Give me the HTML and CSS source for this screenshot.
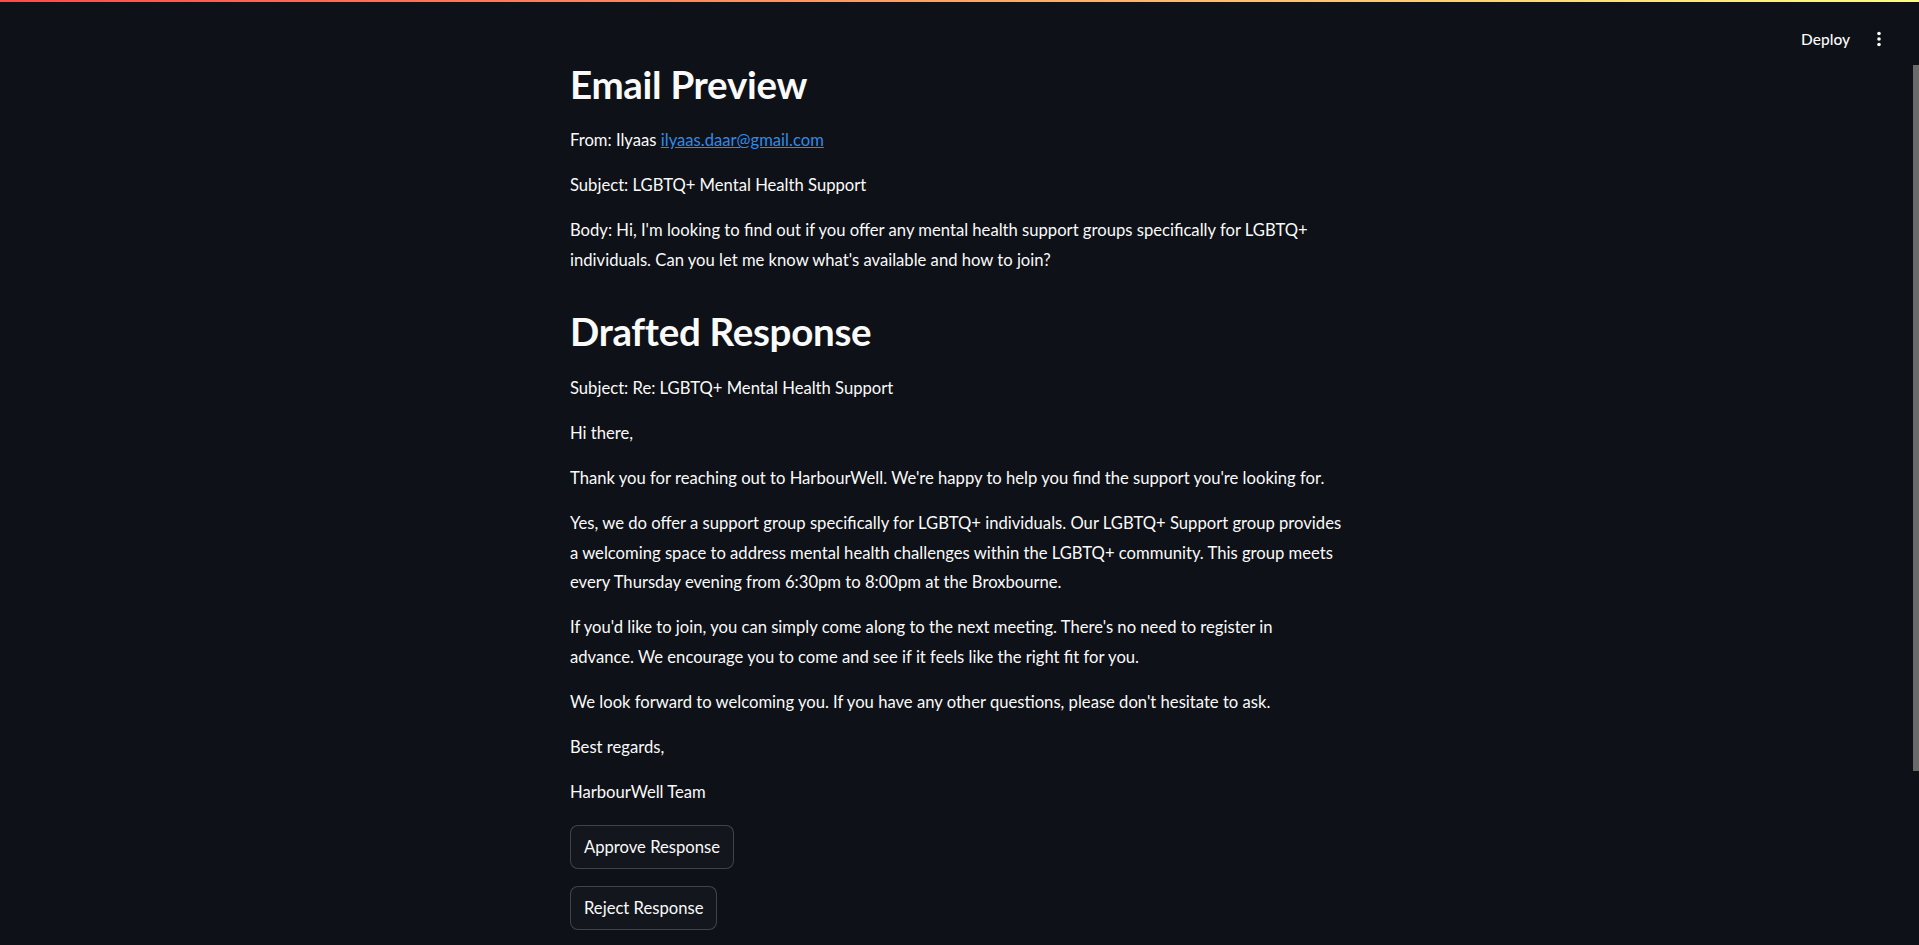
FILE: index.html
```html
<!DOCTYPE html>
<html lang="en">
<head>
<meta charset="utf-8">
<title>Email Preview</title>
<link rel="stylesheet" href="styles.css">
</head>
<body>
<div class="app">
  <div class="decoration"></div>
  <div class="toolbar">
    <span class="deploy">Deploy</span>
    <span class="kebab">
      <svg width="6" height="16" viewBox="0 0 6 16"><circle cx="3" cy="2.5" r="1.8" fill="#fafafa"/><circle cx="3" cy="8" r="1.8" fill="#fafafa"/><circle cx="3" cy="13.5" r="1.8" fill="#fafafa"/></svg>
    </span>
  </div>
  <main class="main">
    <div class="block">
      <h2 class="heading">Email Preview</h2>
      <p class="para">From: Ilyaas <a class="link" href="#">ilyaas.daar@gmail.com</a></p>
      <p class="para">Subject: LGBTQ+ Mental Health Support</p>
      <p class="para">Body: Hi, I'm looking to find out if you offer any mental health support groups specifically for LGBTQ+<br>individuals. Can you let me know what's available and how to join?</p>
      <h2 class="heading heading-second">Drafted Response</h2>
      <p class="para">Subject: Re: LGBTQ+ Mental Health Support</p>
      <p class="para">Hi there,</p>
      <p class="para">Thank you for reaching out to HarbourWell. We're happy to help you find the support you're looking for.</p>
      <p class="para">Yes, we do offer a support group specifically for LGBTQ+ individuals. Our LGBTQ+ Support group provides<br>a welcoming space to address mental health challenges within the LGBTQ+ community. This group meets<br>every Thursday evening from 6:30pm to 8:00pm at the Broxbourne.</p>
      <p class="para">If you'd like to join, you can simply come along to the next meeting. There's no need to register in<br>advance. We encourage you to come and see if it feels like the right fit for you.</p>
      <p class="para">We look forward to welcoming you. If you have any other questions, please don't hesitate to ask.</p>
      <p class="para">Best regards,</p>
      <p class="para">HarbourWell Team</p>
      <button class="btn">Approve Response</button>
      <button class="btn">Reject Response</button>
    </div>
  </main>
  <div class="scroll-thumb"></div>
</div>
</body>
</html>
```
FILE: styles.css
```css
html, body {
  margin: 0;
  padding: 0;
  height: 100%;
  overflow: hidden;
  background: #0e1117;
}
body {
  font-family: Lato, "Liberation Sans", sans-serif;
  color: #fafafa;
}
.app {
  position: relative;
  height: 945px;
  display: flex;
  flex-direction: column;
}
.decoration {
  height: 2px;
  background: linear-gradient(90deg, rgb(255, 75, 75), rgb(255, 253, 128));
  flex: none;
}
.toolbar {
  position: absolute;
  top: 24px;
  right: 37px;
  display: flex;
  align-items: center;
  gap: 26px;
  height: 30px;
}
.deploy {
  font-size: 15.5px;
  font-weight: 500;
  color: #fafafa;
}
.kebab {
  display: flex;
  align-items: center;
}
.main {
  flex: 1;
  display: flex;
  justify-content: center;
  padding-right: 8px;
}
.block {
  width: 771px;
  padding-top: 56.5px;
  display: flex;
  flex-direction: column;
  align-items: flex-start;
  gap: 15.8px;
}
.heading {
  margin: 0 0 1.6px;
  font-size: 38.5px;
  font-weight: 700;
  line-height: 50px;
  letter-spacing: -0.3px;
}
.heading-second {
  margin-top: 15.5px;
}
.para {
  margin: 0;
  font-size: 16.64px;
  line-height: 29.4px;
  white-space: nowrap;
}
.link {
  color: #2f8bea;
  text-decoration: underline;
}
.btn {
  font-family: inherit;
  font-size: 16.64px;
  color: #fafafa;
  background: #13161d;
  border: 1px solid rgba(250, 250, 250, 0.2);
  border-radius: 8px;
  height: 44px;
  padding: 0 13px;
  margin-top: 1px;
}
.btn + .btn {
  margin-top: 1.5px;
}
.scroll-thumb {
  position: absolute;
  right: 0;
  top: 65px;
  width: 6px;
  height: 706px;
  background: #6a6a6a;
}
```
